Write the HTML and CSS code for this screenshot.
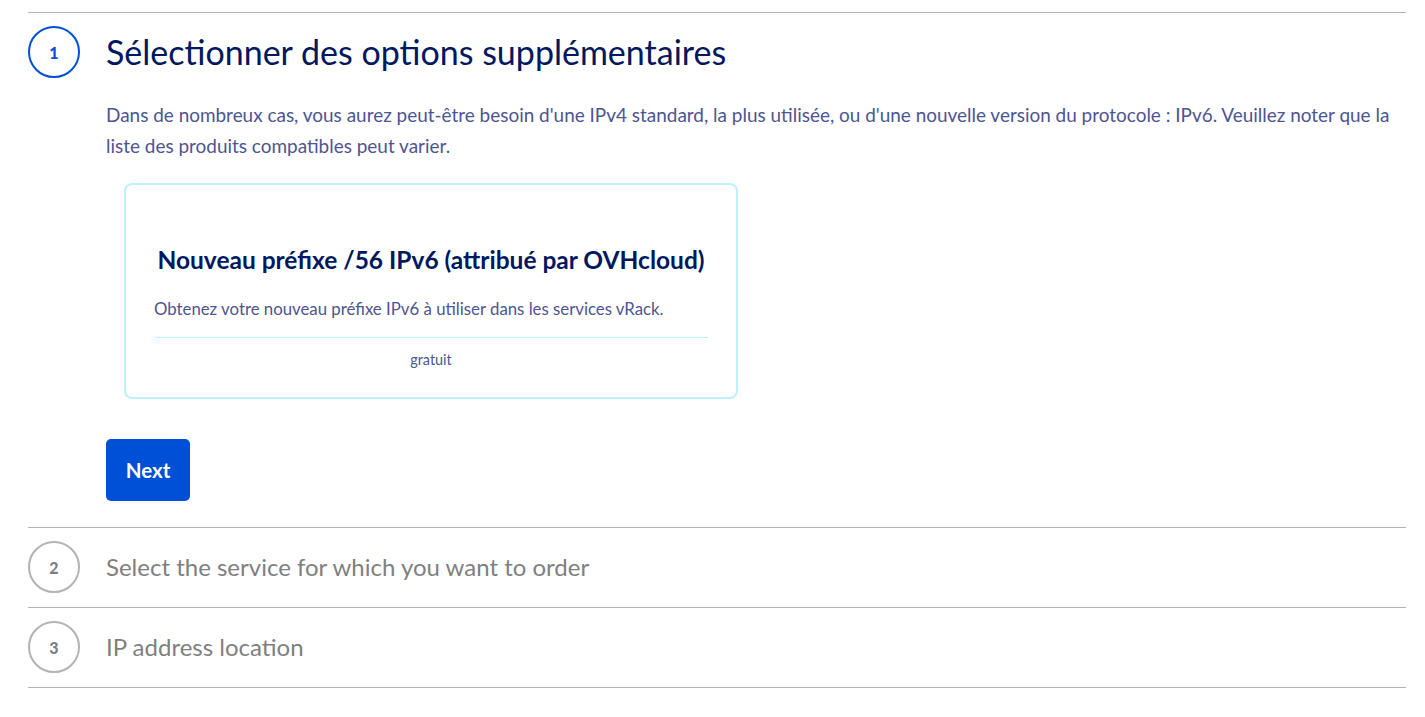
FILE: index.html
```html
<!DOCTYPE html>
<html lang="fr">
<head>
<meta charset="utf-8">
<title>Options</title>
<link rel="stylesheet" href="styles.css">
</head>
<body>
<div class="stepper">
  <section class="step step-active">
    <div class="step-head">
      <div class="step-num">1</div>
      <h2 class="step-title">Sélectionner des options supplémentaires</h2>
    </div>
    <div class="step-body">
      <p class="intro">Dans de nombreux cas, vous aurez peut-être besoin d'une IPv4 standard, la plus utilisée, ou d'une nouvelle version du protocole : IPv6. Veuillez noter que la liste des produits compatibles peut varier.</p>
      <div class="card">
        <h3 class="card-title">Nouveau préfixe /56 IPv6 (attribué par OVHcloud)</h3>
        <p class="card-desc">Obtenez votre nouveau préfixe IPv6 à utiliser dans les services vRack.</p>
        <div class="card-price">gratuit</div>
      </div>
      <button class="btn-next">Next</button>
    </div>
  </section>
  <section class="step">
    <div class="step-head">
      <div class="step-num">2</div>
      <h2 class="step-title">Select the service for which you want to order</h2>
    </div>
  </section>
  <section class="step">
    <div class="step-head">
      <div class="step-num">3</div>
      <h2 class="step-title">IP address location</h2>
    </div>
  </section>
</div>
</body>
</html>
```

FILE: styles.css
```css
* { box-sizing: border-box; }
html, body { margin: 0; padding: 0; background: #fff; }
body {
  font-family: Lato, "Liberation Sans", sans-serif;
  color: #4d5592;
}
.stepper {
  margin: 12px 19px 0 28px;
  border-top: 1px solid #b3b3b3;
}
.step {
  border-bottom: 1px solid #b3b3b3;
}
.step-head {
  display: flex;
  align-items: center;
  gap: 26px;
  padding: 13px 0 14px 0;
}
.step-num {
  width: 52px;
  height: 52px;
  border-radius: 50%;
  border: 2px solid #b3b3b3;
  color: #808080;
  font-weight: 900;
  font-size: 16px;
  display: flex;
  align-items: center;
  justify-content: center;
  flex: none;
}
.step-title {
  margin: 0;
  font-size: 24px;
  line-height: 30px;
  font-weight: 400;
  color: #808080;
}
.step-active .step-head {
  padding-bottom: 13px;
}
.step-active .step-num {
  border-color: #0050d7;
  color: #0050d7;
}
.step-active .step-title {
  font-size: 34px;
  line-height: 40px;
  color: #00185e;
}
.step-body {
  padding: 0 0 26px 78px;
}
.intro {
  margin: 8px 0 0;
  font-size: 18.95px;
  line-height: 31px;
}
.card {
  margin: 22px 0 0 18px;
  width: 614px;
  border: 2px solid #bef1ff;
  border-radius: 8px;
  padding: 60px 28px 27px;
}
.card-title {
  margin: 0;
  text-align: center;
  font-size: 24.5px;
  line-height: 30px;
  font-weight: 700;
  color: #00185e;
}
.card-desc {
  margin: 22px 0 0;
  font-size: 16.8px;
  line-height: 24px;
  padding-bottom: 16px;
  border-bottom: 1px solid #bef1ff;
}
.card-price {
  text-align: center;
  font-size: 14.4px;
  line-height: 20px;
  margin-top: 12px;
}
.btn-next {
  margin-top: 40px;
  display: block;
  width: 84px;
  height: 62px;
  border: none;
  border-radius: 5px;
  background: #0050d7;
  color: #fff;
  font-family: inherit;
  font-size: 20.5px;
  font-weight: 700;
}
```
